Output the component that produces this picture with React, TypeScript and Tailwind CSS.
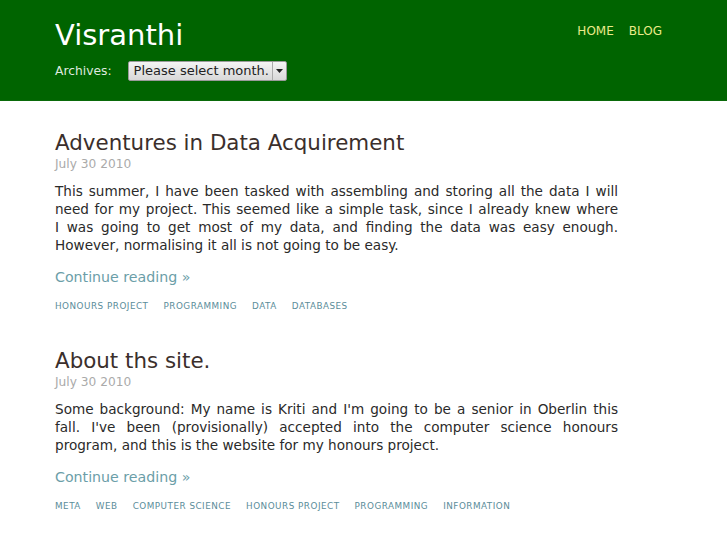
const posts = [
  {
    title: "Adventures in Data Acquirement",
    date: "July 30 2010",
    body: "This summer, I have been tasked with assembling and storing all the data I will need for my project. This seemed like a simple task, since I already knew where I\u00a0was going to get most of my data, and finding the data was easy enough. However, normalising it all is not going to be easy.",
    tags: ["Honours Project", "Programming", "Data", "Databases"],
  },
  {
    title: "About ths site.",
    date: "July 30 2010",
    body: "Some background: My name is Kriti and I'm going to be a senior in Oberlin this fall. I've been (provisionally) accepted into the computer science honours program, and this is the website for my honours project.",
    tags: ["Meta", "Web", "Computer Science", "Honours Project", "Programming", "Information"],
  },
];

export default function App() {
  return (
    <div className="min-h-[545px] bg-white font-['DejaVu_Sans',sans-serif]">
      <header className="h-[101px] bg-[#006400] border-b border-[#0a6a0a] pl-[55px] pr-[65px] flex justify-between">
        <div className="pt-[17px]">
          <h1 className="text-[29px] leading-[36px] text-white">Visranthi</h1>
          <div className="mt-[8px] flex items-center gap-[16px] text-[12.3px] text-[#dfe9df]">
            <span>Archives:</span>
            <div className="flex h-[20px] w-[159px] items-stretch rounded-[2px] border border-[#9a9a9a] bg-gradient-to-b from-[#f4f4f4] to-[#d8d8d8] text-[#222]">
              <span className="flex-1 pl-[5px] leading-[18px] text-[13px]">Please select month.</span>
              <span className="flex w-[14px] items-center justify-center border-l border-[#aaa]">
                <svg width="7" height="4" viewBox="0 0 7 4"><path d="M0 0h7L3.5 4z" fill="#222" /></svg>
              </span>
            </div>
          </div>
        </div>
        <nav className="pt-[22px] flex gap-[15px] text-[12px] text-[#eaea8a]">
          <a>HOME</a>
          <a>BLOG</a>
        </nav>
      </header>
      <main className="pl-[55px] w-[618px] pt-[28px]">
        {posts.map((p) => (
          <article key={p.title} className="mb-[35px]">
            <h2 className="text-[21.4px] leading-[28px] text-[#3b2f2c]">{p.title}</h2>
            <div className="text-[12.2px] leading-[14px] text-[#aaaaaa]">{p.date}</div>
            <p className="mt-[11px] text-[13.6px] leading-[18px] text-[#2a2a2a] text-justify">{p.body}</p>
            <a className="mt-[14px] block text-[14.2px] leading-[18px] text-[#6b9ea8]">Continue reading »</a>
            <div className="mt-[14px] flex gap-[15px] text-[8.8px] leading-[12px] uppercase tracking-[0.5px] text-[#5b8d9a]">
              {p.tags.map((t) => (
                <span key={t}>{t}</span>
              ))}
            </div>
          </article>
        ))}
      </main>
    </div>
  );
}
